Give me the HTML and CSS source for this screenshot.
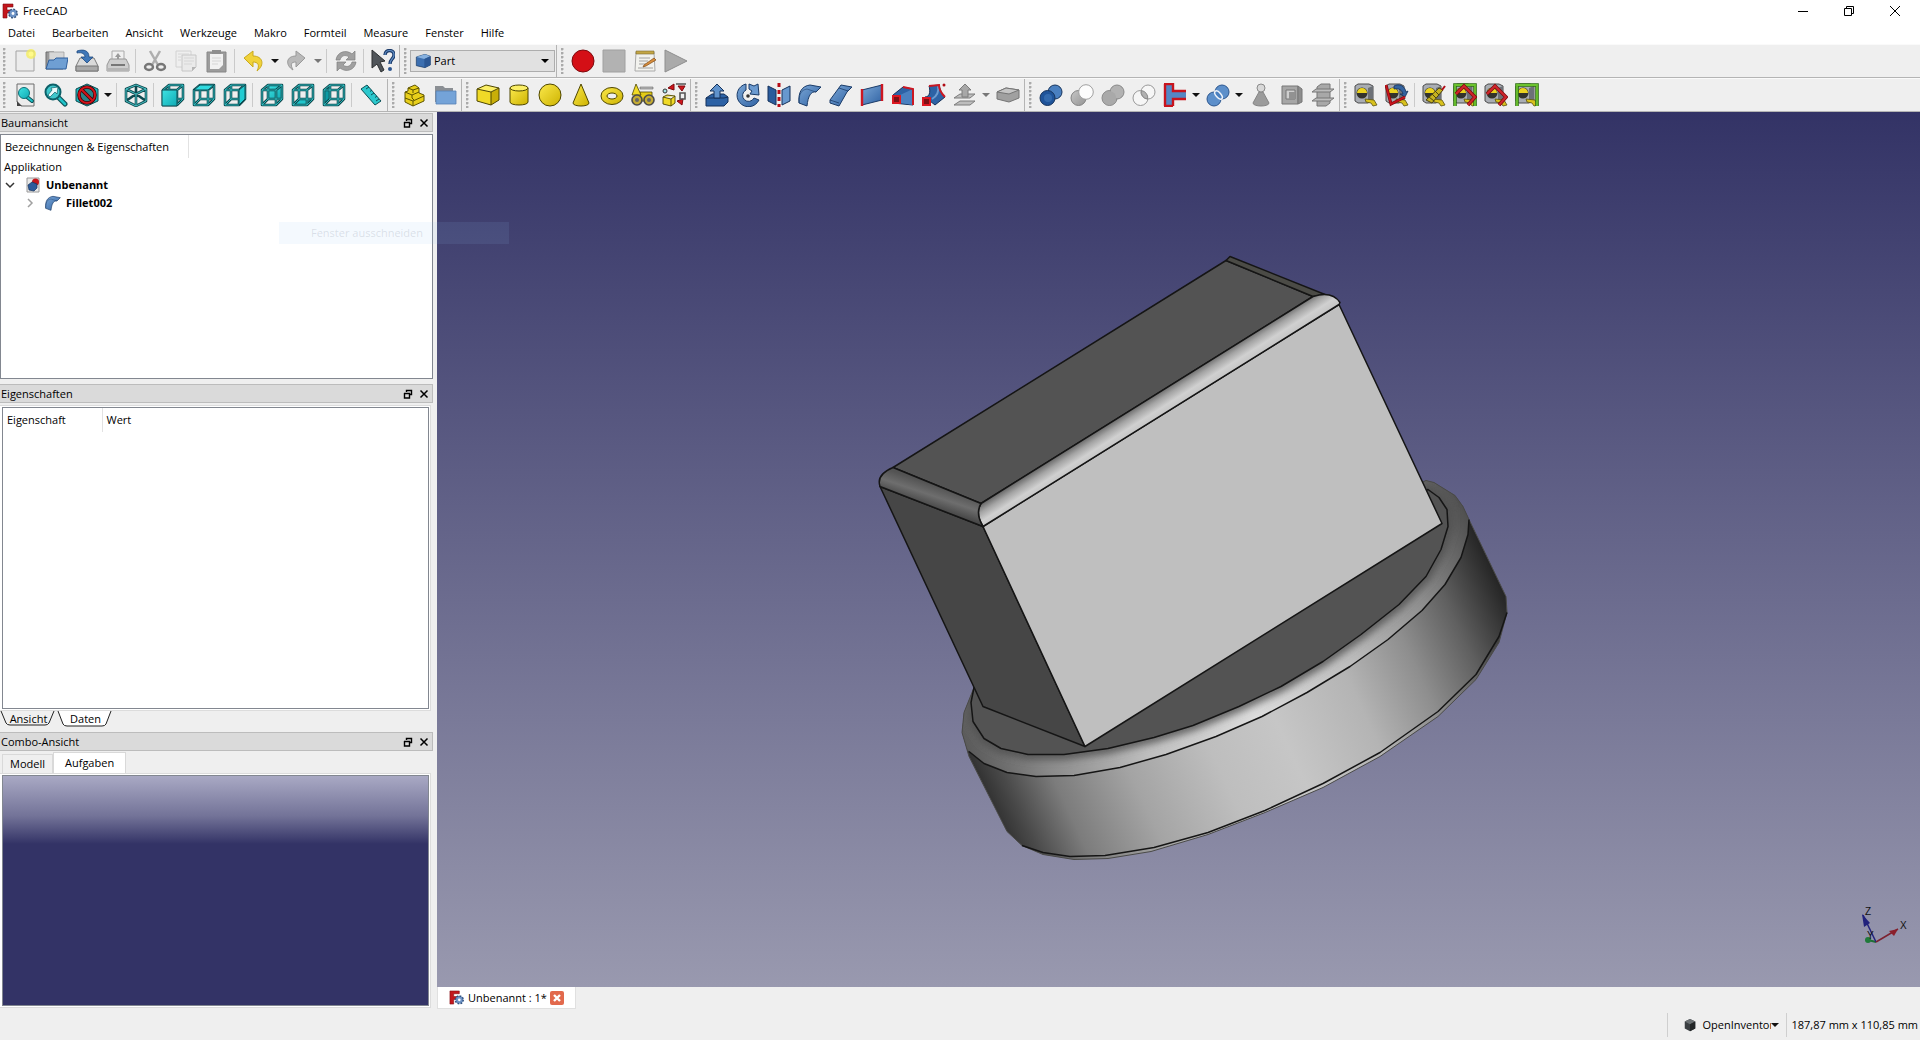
FILE: index.html
```html
<!DOCTYPE html>
<html lang="de">
<head>
<meta charset="utf-8">
<title>FreeCAD</title>
<link rel="stylesheet" href="styles.css">
</head>
<body>
<svg class="defs" aria-hidden="true">
  <defs>
    <linearGradient id="gBlue" x1="0" y1="0" x2="1" y2="1"><stop offset="0" stop-color="#7aa6d6"/><stop offset="1" stop-color="#2f62a3"/></linearGradient>
    <linearGradient id="gYel" x1="0" y1="0" x2="1" y2="1"><stop offset="0" stop-color="#fbe94c"/><stop offset="1" stop-color="#cdb200"/></linearGradient>
    <linearGradient id="gGrey" x1="0" y1="0" x2="1" y2="1"><stop offset="0" stop-color="#c6c6c6"/><stop offset="1" stop-color="#949494"/></linearGradient>
    <linearGradient id="gCyan" x1="0" y1="0" x2="1" y2="1"><stop offset="0" stop-color="#3fe3e3"/><stop offset="1" stop-color="#10aab4"/></linearGradient>
    <g id="wire" fill="none" stroke="#0e4a50" stroke-width="2.600" stroke-linejoin="round"><path d="M2 7h14v15H2zM8 2h14v14H8zM2 7l6-5M16 7l6-5M16 22l6-6M2 22l6-6"/></g>
    <g id="wireIn" fill="none" stroke="#35cfd2" stroke-width=".8" stroke-linejoin="round"><path d="M2 7h14v15H2zM8 2h14v14H8zM2 7l6-5M16 7l6-5M16 22l6-6M2 22l6-6"/></g>
    <g id="tape"><path d="M1 3l3-2h11l4 2v14l-5 3H4l-3-2z" fill="#a9adb3" stroke="#4c4c4c" stroke-width="1"/><path d="M14 5l5-2v14l-5 3z" fill="#6d7177"/><circle cx="8" cy="10" r="5.500" fill="#33332c"/><path d="M3 10a5 5 0 0 1 10 0z" fill="#ecd320"/><path d="M11 16l9 1 3 5-4 1-2-3-5-1z" fill="#d8c11d" stroke="#5b5213" stroke-width=".8"/></g>
  </defs>
  <symbol id="i-app" viewBox="0 0 16 16"><path d="M1 1h10v3H5v3h4v3H5v5H1z" fill="#c4161c" stroke="#7d0c10" stroke-width=".6"/><circle cx="11" cy="10.500" r="4" fill="#5b82b8" stroke="#31527f" stroke-width="2" stroke-dasharray="1.800 1.300"/><circle cx="11" cy="10.500" r="3.400" fill="#6d93c6"/><circle cx="11" cy="10.500" r="1.400" fill="#fff"/></symbol>
  <symbol id="i-new" viewBox="0 0 24 24"><path d="M3 2h18v20H3z" fill="#ececec" stroke="#a3a3a3"/><circle cx="18" cy="5" r="5" fill="#f6ee55" opacity=".75"/><circle cx="18" cy="5" r="2.500" fill="#fffa8a"/></symbol>
  <symbol id="i-open" viewBox="0 0 24 24"><path d="M2 3h8l1 2h8v15H2z" fill="#9a9a9a" stroke="#6d6d6d"/><path d="M5 3h15v12H5z" fill="#d7d7d7" stroke="#999" stroke-width=".7"/><path d="M5 11h5l2-2h12l-2 11H2z" fill="#6f9fd3" stroke="#2f5f9c"/></symbol>
  <symbol id="i-save" viewBox="0 0 24 24"><path d="M5 9h14l4 8v5H1v-5z" fill="#dadada" stroke="#7b7b7b"/><path d="M1 17h22v5H1z" fill="#a9a9a9" stroke="#777"/><path d="M2 2c6-2 12-1 12 6h4l-6 6-6-6h4c0-3-3-5-8-4z" fill="#3f77b8" stroke="#1e4a80" stroke-width=".8"/></symbol>
  <symbol id="i-print" viewBox="0 0 24 24"><path d="M6 2h12v10H6z" fill="#f0f0f0" stroke="#aaa"/><path d="M12 4l3 4h-2v3h-2V8H9z" fill="#9a9a9a"/><path d="M4 10h16l3 6v6H1v-6z" fill="#cecece" stroke="#979797"/><path d="M5 15h14v2H5z" fill="#777"/><path d="M1 19h22v3H1z" fill="#b5b5b5"/></symbol>
  <symbol id="i-cut" viewBox="0 0 24 24"><path d="M7 2l8 14M17 2L9 16" stroke="#aeaeae" stroke-width="2.500"/><g fill="none" stroke="#777" stroke-width="2.400"><ellipse cx="6" cy="18" rx="4" ry="3"/><ellipse cx="18" cy="18" rx="4" ry="3"/></g></symbol>
  <symbol id="i-copy" viewBox="0 0 24 24"><path d="M2 2h15v16H2z" fill="#efefef" stroke="#d2d2d2"/><path d="M8 6h14v12l-4 4H8z" fill="#eaeaea" stroke="#c6c6c6"/><path d="M10 9h10M10 12h10M10 15h8M4 5h11M4 8h3M4 11h3" stroke="#d6d6d6"/><path d="M22 18l-4 4v-4z" fill="#b5b5b5"/></symbol>
  <symbol id="i-paste" viewBox="0 0 24 24"><path d="M2 3h19v20H2z" fill="#9c9c9c" stroke="#878787"/><path d="M5 5h13v15H5z" fill="#f1f1f1"/><path d="M7 1h9v4H7z" fill="#8f8f8f"/><path d="M7 9h9M7 12h9M7 15h6" stroke="#d5d5d5"/><path d="M18 16v4h-4z" fill="#9c9c9c"/></symbol>
  <symbol id="i-undo" viewBox="0 0 24 24"><path d="M2 9l9-7v5c10 0 12 9 4 15 3-6 1-9-4-9v5z" fill="#f0d23a" stroke="#c9a91c"/></symbol>
  <symbol id="i-redo" viewBox="0 0 24 24"><path d="M20 9l-9-7v5C1 7 0 16 8 21c-3-6-2-8 3-8v5z" fill="#b9b9b9" stroke="#999"/></symbol>
  <symbol id="i-refresh" viewBox="0 0 24 24"><path d="M2 11C3 3 12 0 18 5l3-3v9h-9l3-3C11 5 7 7 6 11z" fill="#a0a0a0" stroke="#808080" stroke-width=".7"/><path d="M22 13c-1 8-10 11-16 6l-3 3v-9h9l-3 3c4 3 8 1 9-3z" fill="#a0a0a0" stroke="#808080" stroke-width=".7"/></symbol>
  <symbol id="i-whats" viewBox="0 0 24 24"><path d="M1 1l13 11-5 1 4 8-3 2-4-8-5 4z" fill="#50555a" stroke="#2c2f31"/><path d="M14 6c0-6 9-6 9 0 0 4-4 4-4 9" fill="none" stroke="#1d3c6b" stroke-width="3.400"/><path d="M14 6c0-6 9-6 9 0 0 4-4 4-4 9" fill="none" stroke="#6391c8" stroke-width="1.200"/><circle cx="19" cy="20" r="2" fill="#2d568f"/></symbol>
  <symbol id="i-rec" viewBox="0 0 24 24"><circle cx="12" cy="12" r="11" fill="#d40f16" stroke="#7d0a0e"/></symbol>
  <symbol id="i-stop" viewBox="0 0 24 24"><path d="M1 1h22v22H1z" fill="#b2b2b2" stroke="#a0a0a0"/></symbol>
  <symbol id="i-note" viewBox="0 0 24 24"><path d="M3 3h18l1 19H2z" fill="#f2f2ee" stroke="#aaa"/><path d="M3 2h18v3H3z" fill="#c3a645" stroke="#7a6a30" stroke-width=".6"/><path d="M6 9h11M6 12h9M6 15h7M5 19h15" stroke="#a2a2a2"/><path d="M11 16l10-7 2 2-10 6-3 1z" fill="#d88d3c" stroke="#7d4b18" stroke-width=".7"/></symbol>
  <symbol id="i-play" viewBox="0 0 24 24"><path d="M1 1l22 11L1 23z" fill="#aaa" stroke="#8e8e8e"/></symbol>
  <symbol id="i-part" viewBox="0 0 24 24"><path d="M2 6l13-4 8 3v13l-8 4L2 19z" fill="#3c6fb0" stroke="#173861"/><path d="M2 6l13-4 8 3-9 4z" fill="#86b0de"/><path d="M14 9l9-4v13l-9 4z" fill="#2b5794"/></symbol>

  <symbol id="i-fitall" viewBox="0 0 24 24"><path d="M4 1h17v22H8l-4-4z" fill="#ececec" stroke="#6c6c6c"/><path d="M4 18l5 5H4z" fill="#444"/><path d="M14 14l5 4" stroke="#0d5157" stroke-width="4" stroke-linecap="round"/><path d="M14 14l5 4" stroke="#20c3c8" stroke-width="2" stroke-linecap="round"/><circle cx="11" cy="10" r="5.500" fill="url(#gCyan)" stroke="#0d6d74"/></symbol>
  <symbol id="i-fitsel" viewBox="0 0 24 24"><path d="M13 13l8 8" stroke="#0d5157" stroke-width="5" stroke-linecap="round"/><path d="M13 13l8 8" stroke="#20c3c8" stroke-width="2.600" stroke-linecap="round"/><circle cx="9" cy="9" r="7.500" fill="#3fc7cb" stroke="#0d6068" stroke-width="2"/><path d="M4 12l4-5-1-2 7-1-1 7-2-2-5 5z" fill="#e9fbfb" stroke="#0d6068" stroke-width=".7"/></symbol>
  <symbol id="i-style" viewBox="0 0 24 24"><path d="M12 1l11 5v12l-11 5L1 18V6z" fill="#1eb9bf" stroke="#0d4c52"/><circle cx="12" cy="12" r="8" fill="#2b8388" stroke="#3b0508" stroke-width="3.600"/><path d="M6.500 6.500l11 11" stroke="#3b0508" stroke-width="3.600"/><circle cx="12" cy="12" r="8" fill="none" stroke="#d2131a" stroke-width="2"/><path d="M6.500 6.500l11 11" stroke="#d2131a" stroke-width="2"/></symbol>
  <symbol id="i-iso" viewBox="0 0 24 24"><path d="M12 2l10 4v12l-10 5-10-5V6zM2 6l10 5 10-5M12 11v12M12 2v9M2 18l10-7 10 7" fill="none" stroke="#0e4a50" stroke-width="2.600" stroke-linejoin="round"/><path d="M12 2l10 4v12l-10 5-10-5V6zM2 6l10 5 10-5M12 11v12" fill="none" stroke="#4fd0d3" stroke-width=".9"/></symbol>
  <symbol id="i-front" viewBox="0 0 24 24"><use href="#wire"/><use href="#wireIn"/><path d="M1 7h15v16H1z" fill="url(#gCyan)" stroke="#0e4a50"/></symbol>
  <symbol id="i-top" viewBox="0 0 24 24"><use href="#wire"/><use href="#wireIn"/><path d="M2 7l6-5h14l-6 5z" fill="#2fdadf" stroke="#0e4a50"/></symbol>
  <symbol id="i-right" viewBox="0 0 24 24"><use href="#wire"/><use href="#wireIn"/><path d="M16 7l6-5v14l-6 6z" fill="#23ccd2" stroke="#0e4a50"/></symbol>
  <symbol id="i-rear" viewBox="0 0 24 24"><path d="M8 2h14v14H8z" fill="url(#gCyan)"/><use href="#wire"/><use href="#wireIn"/></symbol>
  <symbol id="i-bottom" viewBox="0 0 24 24"><path d="M2 22l6-6h14l-6 6z" fill="#20c5cb"/><use href="#wire"/><use href="#wireIn"/></symbol>
  <symbol id="i-left" viewBox="0 0 24 24"><path d="M2 7l6-5v14l-6 6z" fill="#0f9aa3"/><use href="#wire"/><use href="#wireIn"/></symbol>
  <symbol id="i-measure" viewBox="0 0 24 24"><path d="M2 6l6-4 14 16-6 4z" fill="#2cc8cd" stroke="#0d5157"/><path d="M10 4l-3 2M13 7l-2 1.500M15 10l-3 2M18 13l-2 1.500M20 16l-3 2" stroke="#0d5157"/></symbol>
  <symbol id="i-pbody" viewBox="0 0 24 24"><path d="M3 15V9l3-1V5l7-3 4 3v5l5 2v6l-11 5-8-4z" fill="#e8cf1b" stroke="#5f5500"/><path d="M3 9l7 3 7-3M6 5l5 2 6-2M3 15l8 3 11-5M11 18v5M10 12v3l2 2M11 7v3" fill="none" stroke="#5f5500"/></symbol>
  <symbol id="i-group" viewBox="0 0 24 24"><path d="M2 3h8l2 2h8v14H2z" fill="#8b8f94"/><path d="M3 8h20v13H3z" fill="#74a3d8" stroke="#5580b5" stroke-width=".8"/></symbol>
  <symbol id="i-box" viewBox="0 0 24 24"><path d="M1 6l14 3v13L1 18z" fill="#f0da27"/><path d="M15 9l8-4v12l-8 5z" fill="#c9ae08"/><path d="M1 6l9-4 13 3-8 4z" fill="#fbef66"/><path d="M1 6l9-4 13 3v12l-8 5-14-4zM1 6l14 3 8-4M15 9v13" fill="none" stroke="#4e4600"/></symbol>
  <symbol id="i-cyl" viewBox="0 0 24 24"><path d="M3 5v14c0 4 18 4 18 0V5z" fill="url(#gYel)" stroke="#4e4600"/><ellipse cx="12" cy="5" rx="9" ry="3" fill="#fbef66" stroke="#4e4600"/></symbol>
  <symbol id="i-sph" viewBox="0 0 24 24"><circle cx="12" cy="12" r="11" fill="url(#gYel)" stroke="#4e4600"/></symbol>
  <symbol id="i-cone" viewBox="0 0 24 24"><path d="M12 1l8 19c0 4-16 4-16 0z" fill="url(#gYel)" stroke="#4e4600"/></symbol>
  <symbol id="i-torus" viewBox="0 0 24 24"><ellipse cx="12" cy="13" rx="11" ry="8.500" fill="url(#gYel)" stroke="#4e4600"/><ellipse cx="12" cy="13" rx="5" ry="3" fill="#efefef" stroke="#4e4600"/></symbol>
  <symbol id="i-prim" viewBox="0 0 24 24"><path d="M9 9h12v9H9z" fill="#e4cb16" stroke="#4e4600" stroke-width=".8"/><path d="M5 1l5 11H1z" fill="#f0da27" stroke="#4e4600" stroke-width=".8"/><path d="M9 4h13v2H9z" fill="#bbb" stroke="#666" stroke-width=".6"/><g fill="#c5ac33" stroke="#4b4b4b" stroke-width="1.600"><circle cx="6" cy="17" r="5"/><circle cx="18" cy="17" r="5"/></g><circle cx="6" cy="17" r="2" fill="#666"/><circle cx="18" cy="17" r="2" fill="#666"/></symbol>
  <symbol id="i-build" viewBox="0 0 24 24"><path d="M1 14l4-2 8 1v7l-4 3-8-2zM1 14l8 2 4-3M9 16v7" fill="#f0da27" stroke="#4e4600" stroke-width=".9"/><circle cx="3" cy="8" r="2" fill="#a5e3e3" stroke="#333"/><path d="M6 5l6-4v6zM16 3h7l-3 5zM15 18l6-2-1 6z" fill="#d0161c" stroke="#7d0a0e"/><path d="M14 1h10M18 10h5v6h-5z" fill="none" stroke="#555" stroke-width="1.600"/></symbol>

  <symbol id="i-extrude" viewBox="0 0 24 24"><path d="M1 15l6-4h12l4 3v5l-4 4H1z" fill="#2d62a5" stroke="#14315a"/><path d="M1 15h18l4-1" fill="none" stroke="#14315a"/><path d="M12 1l7 7h-4v7H9V8H5z" fill="#5f92cc" stroke="#14315a"/></symbol>
  <symbol id="i-revolve" viewBox="0 0 24 24"><path d="M10 1v6a6 6 0 1 0 8 8l5 2A11.500 11.500 0 1 1 10 1z" fill="url(#gBlue)" stroke="#1a3b68"/><path d="M13 1l5 2 4-2 1 11-9-1 2-3-3-2z" fill="#6c9bd0" stroke="#1a3b68"/><circle cx="12" cy="13" r="1.800" fill="#333"/></symbol>
  <symbol id="i-mirror" viewBox="0 0 24 24"><path d="M1 3l8 4v15l-8-4z" fill="#2a5b9c" stroke="#14315a"/><path d="M15 7l8-4v15l-8 4z" fill="#6798ce" stroke="#14315a"/><path d="M12 0v24" stroke="#b60d16" stroke-width="3" stroke-dasharray="4 3"/></symbol>
  <symbol id="i-fillet" viewBox="0 0 24 24"><path d="M1 20C0 9 4 3 12 2l11 2-5 5c-5-1-8 4-9 14z" fill="url(#gBlue)" stroke="#1a3b68"/><path d="M1 20c0-9 2-13 8-14l9 3" fill="none" stroke="#1a3b68" stroke-width=".8" opacity=".7"/></symbol>
  <symbol id="i-chamfer" viewBox="0 0 24 24"><path d="M1 17L12 2l11 2-5 5-8 14-9-3z" fill="url(#gBlue)" stroke="#1a3b68"/><path d="M10 5l9 3M1 17l9 3" stroke="#1a3b68" stroke-width=".8"/></symbol>
  <symbol id="i-ruled" viewBox="0 0 24 24"><path d="M2 7l20-5v15L2 22z" fill="url(#gBlue)" stroke="#1a3b68"/><path d="M2 6v17M22 1v17" stroke="#cc1722" stroke-width="2.400"/></symbol>
  <symbol id="i-loft" viewBox="0 0 24 24"><path d="M2 12L12 4l10 2v16L2 20z" fill="#2d62a5" stroke="#14315a"/><path d="M9 12l13-6v16L9 20z" fill="#4a80c0"/><path d="M12 4l10 2v16" fill="none" stroke="#cc1722" stroke-width="2"/><path d="M2 13h7v7H2z" fill="#7c1015" stroke="#dc1721" stroke-width="2"/></symbol>
  <symbol id="i-sweep" viewBox="0 0 24 24"><path d="M3 14c6 0 5-8 4-11l10-1c2 8 4 10 6 12l-10 8z" fill="#2d62a5" stroke="#14315a"/><path d="M10 16c5-3 7-8 6-13" fill="none" stroke="#6c9bd0" stroke-width="2"/><path d="M7 3l10-1c0 5 3 9 6 12" fill="none" stroke="#cc1722" stroke-width="2"/><path d="M1 15h7v7H1z" fill="#7c1015" stroke="#dc1721" stroke-width="2"/><circle cx="22" cy="2" r="1.500" fill="#b10d16"/></symbol>
  <symbol id="i-offset" viewBox="0 0 24 24"><path d="M1 22l6-4h15l-5 4zM1 15l6-4h15l-5 4z" fill="#bdbdbd" stroke="#7c7c7c"/><path d="M12 1l6 6h-3v7H9V7H6z" fill="#a7a7a7" stroke="#7c7c7c"/></symbol>
  <symbol id="i-thick" viewBox="0 0 24 24"><path d="M1 9l9-4 13 2v8l-10 4-12-3z" fill="#a0a0a0" stroke="#757575"/><path d="M1 9l9-4 13 2-10 4z" fill="#c5c5c5" stroke="#757575"/></symbol>

  <symbol id="i-bool" viewBox="0 0 24 24"><circle cx="16" cy="9" r="7" fill="#4a80c0" stroke="#17345c"/><circle cx="8.500" cy="15" r="7.500" fill="#1f549a" stroke="#17345c"/><circle cx="9" cy="15" r="4" fill="#4179ba" opacity=".6"/></symbol>
  <symbol id="i-bcut" viewBox="0 0 24 24"><circle cx="8.500" cy="15" r="7.500" fill="url(#gGrey)" stroke="#848484"/><circle cx="16" cy="9" r="7.300" fill="#fcfcfc" stroke="#a0a0a0"/></symbol>
  <symbol id="i-union" viewBox="0 0 24 24"><circle cx="8.500" cy="15" r="7.500" fill="#a9a9a9" stroke="#888"/><circle cx="16" cy="9" r="7" fill="#b2b2b2" stroke="#888"/><circle cx="8.500" cy="15" r="6.800" fill="#a9a9a9"/></symbol>
  <symbol id="i-inter" viewBox="0 0 24 24"><circle cx="8.500" cy="15" r="7.500" fill="#f6f6f6" stroke="#999"/><circle cx="16" cy="9" r="7" fill="#f6f6f6" stroke="#999"/><path d="M9.300 7.500A7.500 7.500 0 0 1 15.700 16 7 7 0 0 1 9.300 7.500z" fill="#b0b0b0" stroke="#888"/></symbol>
  <symbol id="i-join" viewBox="0 0 24 24"><path d="M2 1h7v22H2zM9 9h14v6H9z" fill="#5487c4"/><path d="M1 1h9v7h13M10 23v-7h13M1 23h9M2 1v22" fill="none" stroke="#c8141d" stroke-width="2.400"/></symbol>
  <symbol id="i-split" viewBox="0 0 24 24"><circle cx="16" cy="9" r="7" fill="#5c8fca" stroke="#2b568f"/><circle cx="8" cy="16" r="7" fill="#5c8fca" stroke="#2b568f"/><ellipse cx="12.500" cy="12" rx="2.500" ry="5" transform="rotate(-40 12.500 12)" fill="#4a80c0" stroke="#eef3fa" stroke-width="1.500"/></symbol>
  <symbol id="i-check" viewBox="0 0 24 24"><path d="M10 9h4l6 11c0 4-16 4-16 0z" fill="#9b9b9b" stroke="#858585"/><circle cx="12" cy="5" r="4" fill="#d8d8d8" stroke="#8a8a8a"/></symbol>
  <symbol id="i-defeat" viewBox="0 0 24 24"><path d="M2 3h16v18H2z" fill="#a6a6a6" stroke="#777"/><path d="M18 3l4 3v13l-4 2z" fill="#8d8d8d" stroke="#777"/><path d="M6 7h9v9H6z" fill="#cfcfcf" stroke="#777"/><path d="M9 9h6v7H9z" fill="#929292"/></symbol>
  <symbol id="i-section" viewBox="0 0 24 24"><path d="M6 4l4-3h9v19l-4 3H6z" fill="#a8a8a8" stroke="#777"/><path d="M1 9l4-3h18l-4 3zM1 18l4-3h18l-4 3z" fill="#bdbdbd" stroke="#777"/></symbol>
  <symbol id="i-mlin" viewBox="0 0 24 24"><use href="#tape"/></symbol>
  <symbol id="i-mang" viewBox="0 0 24 24"><use href="#tape"/><path d="M9 3c5-3 11 0 12 6l2-1-3 6-5-3h3c-1-4-4-6-9-5z" fill="#34639f" stroke="#14315a" stroke-width=".8"/><path d="M1 2l5 19 14-7" fill="none" stroke="#7d0a0e" stroke-width="3"/><path d="M1 2l5 19 14-7" fill="none" stroke="#c8141d" stroke-width="1.600"/></symbol>
  <symbol id="i-mref" viewBox="0 0 24 24"><use href="#tape"/><path d="M4 17L17 5l4 2L10 20z" fill="#c6b21f" stroke="#4b4410"/><path d="M7 14l5 4M10 11l4 4M13 8l4 4" stroke="#4b4410"/><path d="M20 7l3-4" stroke="#b10d16" stroke-width="2"/></symbol>
  <symbol id="i-mall" viewBox="0 0 24 24"><use href="#tape"/><path d="M2 23V2h20v21" fill="none" stroke="#2d6d12" stroke-width="3.600"/><path d="M2 23V2h20v21" fill="none" stroke="#6cc32e" stroke-width="1.800"/><path d="M3 11l8-8 11 11-7 8" fill="none" stroke="#7d0a0e" stroke-width="3.600"/><path d="M3 11l8-8 11 11-7 8" fill="none" stroke="#d0262c" stroke-width="2"/></symbol>
  <symbol id="i-m3d" viewBox="0 0 24 24"><use href="#tape"/><path d="M3 11l8-8 11 11-7 8" fill="none" stroke="#7d0a0e" stroke-width="3.600"/><path d="M3 11l8-8 11 11-7 8" fill="none" stroke="#d0262c" stroke-width="2"/></symbol>
  <symbol id="i-mdel" viewBox="0 0 24 24"><use href="#tape"/><path d="M2 23V2h20v21" fill="none" stroke="#2d6d12" stroke-width="3.600"/><path d="M2 23V2h20v21" fill="none" stroke="#6cc32e" stroke-width="1.800"/></symbol>

  <symbol id="i-float" viewBox="0 0 10 10"><path d="M3.500 3V1.500h5v4H7M3 1.500h6M1 4.500h6M1.500 4v5h5V4" fill="none" stroke="#000" stroke-width="1.400"/></symbol>
  <symbol id="i-x" viewBox="0 0 10 10"><path d="M1.500 1.500l7 7M8.500 1.500l-7 7" fill="none" stroke="#000" stroke-width="1.500"/></symbol>
  <symbol id="i-doc" viewBox="0 0 16 16"><path d="M2 1h12v14H2z" fill="#e9e9e9" stroke="#9a9a9a"/><circle cx="10.500" cy="5" r="3.500" fill="#c4161c"/><path d="M3 8l4-3 5 2v4l-3 3-5-1z" fill="#2c5b9b" stroke="#14315a" stroke-width=".7"/></symbol>
  <symbol id="i-cube" viewBox="0 0 16 16"><path d="M8 1l6 3v8l-6 3-6-3V4z" fill="#3b3f42"/><path d="M8 1l6 3-6 3-6-3z" fill="#6b7073"/><path d="M8 7l6-3v8l-6 3z" fill="#232628"/></symbol>
</svg>

<header class="titlebar">
  <svg class="app-icon"><use href="#i-app"/></svg>
  <span class="app-name">FreeCAD</span>
  <div class="window-controls">
    <button aria-label="Minimieren"><svg viewBox="0 0 10 10"><path d="M0 5.500h10" stroke="#000"/></svg></button>
    <button aria-label="Verkleinern"><svg viewBox="0 0 10 10"><path d="M.5 2.500h7v7h-7zM2.500 2.500v-2h7v7h-2" fill="none" stroke="#000"/></svg></button>
    <button aria-label="Schließen"><svg viewBox="0 0 10 10"><path d="M0 0l10 10M10 0L0 10" stroke="#000" fill="none"/></svg></button>
  </div>
</header>

<nav class="menubar">
  <button>Datei</button><button>Bearbeiten</button><button>Ansicht</button><button>Werkzeuge</button><button>Makro</button><button>Formteil</button><button>Measure</button><button>Fenster</button><button>Hilfe</button>
</nav>

<div class="toolrow">
  <div class="toolbar">
    <i class="grip"></i>
    <button class="tool" aria-label="Neu"><svg><use href="#i-new"/></svg></button>
    <button class="tool" aria-label="Öffnen"><svg><use href="#i-open"/></svg></button>
    <button class="tool" aria-label="Speichern"><svg><use href="#i-save"/></svg></button>
    <button class="tool" aria-label="Drucken"><svg><use href="#i-print"/></svg></button>
    <i class="sep"></i>
    <button class="tool" aria-label="Ausschneiden"><svg><use href="#i-cut"/></svg></button>
    <button class="tool" aria-label="Kopieren"><svg><use href="#i-copy"/></svg></button>
    <button class="tool" aria-label="Einfügen"><svg><use href="#i-paste"/></svg></button>
    <i class="sep"></i>
    <button class="tool" aria-label="Rückgängig"><svg><use href="#i-undo"/></svg></button>
    <button class="drop" aria-label="Rückgängig-Liste"></button>
    <button class="tool" aria-label="Wiederholen"><svg><use href="#i-redo"/></svg></button>
    <button class="drop drop-off" aria-label="Wiederholen-Liste"></button>
    <i class="sep"></i>
    <button class="tool" aria-label="Aktualisieren"><svg><use href="#i-refresh"/></svg></button>
    <i class="sep"></i>
    <button class="tool" aria-label="Direkthilfe"><svg><use href="#i-whats"/></svg></button>
  </div>
  <div class="toolbar">
    <i class="grip"></i>
    <div class="workbench">
      <svg><use href="#i-part"/></svg>
      <select aria-label="Arbeitsbereich"><option>Part</option></select>
    </div>
  </div>
  <div class="toolbar toolbar-last">
    <i class="grip"></i>
    <button class="tool" aria-label="Makro aufzeichnen"><svg><use href="#i-rec"/></svg></button>
    <button class="tool" aria-label="Aufzeichnung stoppen"><svg><use href="#i-stop"/></svg></button>
    <button class="tool" aria-label="Makros"><svg><use href="#i-note"/></svg></button>
    <button class="tool" aria-label="Makro ausführen"><svg><use href="#i-play"/></svg></button>
  </div>
</div>

<div class="toolrow">
  <div class="toolbar">
    <i class="grip"></i>
    <button class="tool" aria-label="Alles anzeigen"><svg><use href="#i-fitall"/></svg></button>
    <button class="tool" aria-label="Auswahl anzeigen"><svg><use href="#i-fitsel"/></svg></button>
    <button class="tool" aria-label="Darstellung"><svg><use href="#i-style"/></svg></button>
    <button class="drop" aria-label="Darstellungsarten"></button>
    <i class="sep"></i>
    <button class="tool" aria-label="Axonometrisch"><svg><use href="#i-iso"/></svg></button>
    <i class="sep"></i>
    <button class="tool" aria-label="Vorne"><svg><use href="#i-front"/></svg></button>
    <button class="tool" aria-label="Oben"><svg><use href="#i-top"/></svg></button>
    <button class="tool" aria-label="Rechts"><svg><use href="#i-right"/></svg></button>
    <i class="sep"></i>
    <button class="tool" aria-label="Hinten"><svg><use href="#i-rear"/></svg></button>
    <button class="tool" aria-label="Unten"><svg><use href="#i-bottom"/></svg></button>
    <button class="tool" aria-label="Links"><svg><use href="#i-left"/></svg></button>
    <i class="sep"></i>
    <button class="tool" aria-label="Messen"><svg><use href="#i-measure"/></svg></button>
  </div>
  <div class="toolbar">
    <i class="grip"></i>
    <button class="tool" aria-label="Teil"><svg><use href="#i-pbody"/></svg></button>
    <button class="tool" aria-label="Gruppe"><svg><use href="#i-group"/></svg></button>
  </div>
  <div class="toolbar">
    <i class="grip"></i>
    <button class="tool" aria-label="Würfel"><svg><use href="#i-box"/></svg></button>
    <button class="tool" aria-label="Zylinder"><svg><use href="#i-cyl"/></svg></button>
    <button class="tool" aria-label="Kugel"><svg><use href="#i-sph"/></svg></button>
    <button class="tool" aria-label="Kegel"><svg><use href="#i-cone"/></svg></button>
    <button class="tool" aria-label="Torus"><svg><use href="#i-torus"/></svg></button>
    <button class="tool" aria-label="Grundkörper"><svg><use href="#i-prim"/></svg></button>
    <button class="tool" aria-label="Formgenerator"><svg><use href="#i-build"/></svg></button>
  </div>
  <div class="toolbar">
    <i class="grip"></i>
    <button class="tool" aria-label="Extrudieren"><svg><use href="#i-extrude"/></svg></button>
    <button class="tool" aria-label="Rotieren"><svg><use href="#i-revolve"/></svg></button>
    <button class="tool" aria-label="Spiegeln"><svg><use href="#i-mirror"/></svg></button>
    <button class="tool" aria-label="Verrundung"><svg><use href="#i-fillet"/></svg></button>
    <button class="tool" aria-label="Fase"><svg><use href="#i-chamfer"/></svg></button>
    <button class="tool" aria-label="Regelfläche"><svg><use href="#i-ruled"/></svg></button>
    <button class="tool" aria-label="Ausformung"><svg><use href="#i-loft"/></svg></button>
    <button class="tool" aria-label="Austragung"><svg><use href="#i-sweep"/></svg></button>
    <button class="tool" aria-label="Versatz"><svg><use href="#i-offset"/></svg></button>
    <button class="drop drop-off" aria-label="Versatzarten"></button>
    <button class="tool" aria-label="Dicke"><svg><use href="#i-thick"/></svg></button>
  </div>
  <div class="toolbar">
    <i class="grip"></i>
    <button class="tool" aria-label="Boolesche Verknüpfung"><svg><use href="#i-bool"/></svg></button>
    <button class="tool" aria-label="Differenz"><svg><use href="#i-bcut"/></svg></button>
    <button class="tool" aria-label="Vereinigung"><svg><use href="#i-union"/></svg></button>
    <button class="tool" aria-label="Schnittmenge"><svg><use href="#i-inter"/></svg></button>
    <button class="tool" aria-label="Verbinden"><svg><use href="#i-join"/></svg></button>
    <button class="drop" aria-label="Verbindungsarten"></button>
    <button class="tool" aria-label="Aufteilen"><svg><use href="#i-split"/></svg></button>
    <button class="drop" aria-label="Aufteilungsarten"></button>
    <button class="tool" aria-label="Geometrie prüfen"><svg><use href="#i-check"/></svg></button>
    <button class="tool" aria-label="Merkmal entfernen"><svg><use href="#i-defeat"/></svg></button>
    <button class="tool" aria-label="Querschnitte"><svg><use href="#i-section"/></svg></button>
  </div>
  <div class="toolbar toolbar-last">
    <i class="grip"></i>
    <button class="tool" aria-label="Linear messen"><svg><use href="#i-mlin"/></svg></button>
    <button class="tool" aria-label="Winkel messen"><svg><use href="#i-mang"/></svg></button>
    <i class="sep"></i>
    <button class="tool" aria-label="Messung auffrischen"><svg><use href="#i-mref"/></svg></button>
    <button class="tool" aria-label="Alle umschalten"><svg><use href="#i-mall"/></svg></button>
    <button class="tool" aria-label="3D umschalten"><svg><use href="#i-m3d"/></svg></button>
    <button class="tool" aria-label="Delta umschalten"><svg><use href="#i-mdel"/></svg></button>
  </div>
</div>

<main class="workspace">
  <aside class="docks">
    <section class="dock dock-tree">
      <div class="dock-title"><h2>Baumansicht</h2><button aria-label="Lösen"><svg><use href="#i-float"/></svg></button><button aria-label="Schließen"><svg><use href="#i-x"/></svg></button></div>
      <div class="tree">
        <div class="tree-head"><span>Bezeichnungen &amp; Eigenschaften</span></div>
        <ul>
          <li class="node-root">Applikation</li>
          <li class="node"><svg class="arrow" viewBox="0 0 10 10"><path d="M1 3l4 4 4-4" fill="none" stroke="#333" stroke-width="1.500"/></svg><svg class="node-icon"><use href="#i-doc"/></svg><b>Unbenannt</b></li>
          <li class="node node-child"><svg class="arrow" viewBox="0 0 10 10"><path d="M3 1l4 4-4 4" fill="none" stroke="#a0a0a0" stroke-width="1.500"/></svg><svg class="node-icon"><use href="#i-fillet"/></svg><b>Fillet002</b></li>
        </ul>
      </div>
    </section>
    <section class="dock dock-props">
      <div class="dock-title"><h2>Eigenschaften</h2><button aria-label="Lösen"><svg><use href="#i-float"/></svg></button><button aria-label="Schließen"><svg><use href="#i-x"/></svg></button></div>
      <div class="pane"><div class="pane-inner">
        <table class="props"><thead><tr><th class="prop-name">Eigenschaft</th><th>Wert</th></tr></thead></table>
      </div></div>
      <div class="slant-tabs">
        <button class="slant"><svg viewBox="0 0 60 16" preserveAspectRatio="none"><path d="M1 0l5 12q1 2 4 2h35q3 0 4-2l5-12" fill="#f0f0f0" stroke="#222"/></svg><span>Ansicht</span></button>
        <button class="slant slant-on"><svg viewBox="0 0 60 16" preserveAspectRatio="none"><path d="M1 0l5 13q1 2 4 2h35q3 0 4-2l5-13" fill="#fff" stroke="#222"/></svg><span>Daten</span></button>
      </div>
    </section>
    <section class="dock dock-combo">
      <div class="dock-title"><h2>Combo-Ansicht</h2><button aria-label="Lösen"><svg><use href="#i-float"/></svg></button><button aria-label="Schließen"><svg><use href="#i-x"/></svg></button></div>
      <div class="tabs"><button class="tab">Modell</button><button class="tab tab-on">Aufgaben</button></div>
      <div class="pane"><div class="pane-inner task-panel"></div></div>
    </section>
    <div class="ghost-menu">Fenster ausschneiden</div>
  </aside>

  <section class="mdi">
    <div class="viewport">
      <svg class="model" viewBox="437 113 1483 874" role="img" aria-label="3D-Modell">
        <defs>
          <linearGradient id="side" gradientUnits="userSpaceOnUse" x1="968" y1="752" x2="1469" y2="520"><stop offset="0" stop-color="#333"/><stop offset=".04" stop-color="#4a4a4a"/><stop offset=".12" stop-color="#7c7c7c"/><stop offset=".25" stop-color="#a4a4a4"/><stop offset=".4" stop-color="#bebebe"/><stop offset=".53" stop-color="#c6c6c6"/><stop offset=".68" stop-color="#b4b4b4"/><stop offset=".8" stop-color="#8e8e8e"/><stop offset=".9" stop-color="#606060"/><stop offset="1" stop-color="#262626"/></linearGradient>
          <linearGradient id="ring" gradientUnits="userSpaceOnUse" x1="968" y1="752" x2="1469" y2="520"><stop offset="0" stop-color="#5a5a5a"/><stop offset=".12" stop-color="#8a8a8a"/><stop offset=".3" stop-color="#c0c0c0"/><stop offset=".5" stop-color="#dcdcdc"/><stop offset=".7" stop-color="#bcbcbc"/><stop offset=".86" stop-color="#8e8e8e"/><stop offset="1" stop-color="#505050"/></linearGradient>
          <linearGradient id="edgeFront" gradientUnits="userSpaceOnUse" x1="1147" y1="400" x2="1159" y2="419"><stop offset="0" stop-color="#6a6a6a"/><stop offset=".3" stop-color="#a4a4a4"/><stop offset=".65" stop-color="#d0d0d0"/><stop offset="1" stop-color="#c4c4c4"/></linearGradient>
          <linearGradient id="edgeLeft" gradientUnits="userSpaceOnUse" x1="937" y1="486" x2="930" y2="507"><stop offset="0" stop-color="#535353"/><stop offset=".5" stop-color="#6e6e6e"/><stop offset="1" stop-color="#494949"/></linearGradient>
          <filter id="soft" x="-10%" y="-10%" width="120%" height="120%"><feGaussianBlur stdDeviation="4"/></filter>
          <path id="outer" d="M1426 481L1434 483L1455 496L1463 507L1469 520L1506 597L1507 613L1499 643L1476 680L1438 717L1380 757L1323 788L1265 813L1208 835L1151 852L1108 859L1074 860L1043 855L1022 846L1007 832L969 757L962 733L964 713L974 688Z"/>
          <path id="cylTop" d="M1469 520L1468 535L1461 558L1445 585L1422 611L1388 640L1350 667L1307 693L1262 717L1216 737L1166 755L1120 768L1074 776L1036 777L1007 773L984 764L969 752"/>
          <path id="inner" d="M974 688L971 703L973 722L984 739L1001 749L1028 755L1064 755L1108 749L1154 738L1193 726L1239 707L1281 687L1323 662L1361 635L1399 605L1426 577L1441 550L1448 527L1447 510L1439 498L1428 490Z"/>
          <path id="rim" d="M1507 613L1499 637L1476 675L1438 712L1380 753L1323 784L1265 811L1208 833L1154 848L1105 856L1070 857L1043 853L1022 846"/>
          <clipPath id="clipOuter"><use href="#outer"/></clipPath>
        </defs>
        <use href="#outer" fill="url(#side)"/>
        <g clip-path="url(#clipOuter)">
          <path d="M1469 520L1468 535L1461 558L1445 585L1422 611L1388 640L1350 667L1307 693L1262 717L1216 737L1166 755L1120 768L1074 776L1036 777L1007 773L984 764L969 752L920 700L980 640L1420 440L1475 500Z" fill="url(#ring)"/>
          <use href="#inner" fill="none" stroke="#505050" stroke-width="9" filter="url(#soft)"/>
        </g>
        <use href="#inner" fill="#535353"/>
        <g fill="none" stroke="#151515" stroke-width="1.500" stroke-linejoin="round">
          <use href="#outer" stroke="#4a4a48" stroke-width="1"/>
          <use href="#inner"/><use href="#cylTop"/><use href="#rim"/>
        </g>
        <g stroke="#151515" stroke-width="1.500" stroke-linejoin="round">
          <path d="M880 487L983 527L1085 747L983 707Z" fill="#464646"/>
          <path d="M983 527L1339 305L1442 524L1085 747Z" fill="#bfbfbf"/>
          <path d="M893 468L1226 261L1313 297L981 504Z" fill="#535353"/>
          <path d="M1226 261L1230 257L1325 295L1313 297Z" fill="#4b4b46"/>
          <path d="M981 504L1313 297Q1332 291 1340 303L1339 305L983 527Q975 514 981 504Z" fill="url(#edgeFront)"/>
          <path d="M893 468L981 504Q975 514 983 527L880 487Q876 475 893 468Z" fill="url(#edgeLeft)"/>
        </g>
      </svg>
      <svg class="axis-cross" viewBox="0 0 60 50" role="img" aria-label="Achsenkreuz">
        <path d="M20 37L12 35" stroke="#1f6f35" stroke-width="2"/><circle cx="12" cy="35" r="3" fill="#1f7a3a"/>
        <path d="M20 37L7 10" stroke="#22227c" stroke-width="1.500"/><path d="M6 9l8 9-6 4z" fill="#22227c"/>
        <path d="M20 37L42 24" stroke="#7c2230" stroke-width="1.500"/><path d="M42 24l-4 7-5-5z" fill="#8b1f2b"/>
        <text x="9" y="10">Z</text><text x="44" y="24">X</text><text x="11" y="34">Y</text>
      </svg>
    </div>
    <div class="mdi-tabs">
      <div class="mdi-tab"><svg><use href="#i-app"/></svg><span>Unbenannt : 1*</span><button aria-label="Schließen"><svg viewBox="0 0 14 14"><path d="M4 4l6 6M10 4l-6 6" stroke="#fff" stroke-width="2.400"/></svg></button></div>
    </div>
  </section>
</main>

<footer class="statusbar">
  <button class="nav-style"><svg><use href="#i-cube"/></svg><span>OpenInventor</span><i class="caret"></i></button>
  <span class="dims">187,87 mm x 110,85 mm</span>
</footer>
</body>
</html>
```
FILE: styles.css
```css
* { box-sizing: border-box; }

body {
  margin: 0;
  min-height: 100vh;
  display: flex;
  flex-direction: column;
  background: #efefef;
  color: #000;
  font: 11px/18px "Open Sans", "Noto Sans", sans-serif;
  overflow: hidden;
}

button, select {
  font: inherit;
  color: inherit;
  background: none;
  border: 0;
  padding: 0;
  margin: 0;
}

.defs { position: absolute; width: 0; height: 0; }

/* Title bar and menu */
.titlebar {
  display: flex;
  align-items: center;
  height: 22px;
  padding-left: 2px;
  background: #fff;
}
.app-icon { width: 16px; height: 16px; }
.app-name { margin-left: 5px; }
.window-controls { display: flex; margin: 0 2px 0 auto; }
.window-controls button { width: 46px; height: 22px; display: grid; place-items: center; }
.window-controls svg { width: 10px; height: 10px; display: block; }

.menubar { display: flex; gap: 1px; height: 22px; background: #fff; }
.menubar button { padding: 0 8px; height: 21px; }

/* Toolbars */
.toolrow {
  display: flex;
  height: 34px;
  border-top: 1px solid #fafafa;
  border-bottom: 1px solid #b4b4b4;
}
.toolbar { display: flex; align-items: center; padding-right: 1px; border-right: 1px solid #b4b4b4; }
.toolbar-last { border-right: 0; }
.grip {
  width: 3px;
  height: 26px;
  margin: 0 3px 0 4px;
  background: radial-gradient(circle at 1px 1px, #aaa 1px, transparent 2px) 0 0 / 3px 4px;
}
.toolbar:first-child .grip { margin-left: 3px; }
.tool { width: 31px; height: 31px; display: grid; place-items: center; }
.tool svg { width: 24px; height: 24px; display: block; }
.drop { width: 12px; height: 31px; display: grid; place-items: center; }
.drop::before, .caret {
  content: "";
  border: 4px solid transparent;
  border-top-color: #111;
  border-bottom: 0;
}
.drop-off::before { border-top-color: #777; }
.sep { width: 1px; height: 24px; margin: 0 3px 0 2px; background: #cacaca; }

.workbench {
  position: relative;
  display: flex;
  align-items: center;
  width: 145px;
  height: 22px;
  background: #e1e1e1;
  border: 1px solid #adadad;
}
.workbench::after {
  content: "";
  position: absolute;
  right: 5px;
  border: 4px solid transparent;
  border-top-color: #000;
  border-bottom: 0;
}
.workbench svg { width: 16px; height: 16px; margin-left: 4px; flex: none; }
.workbench select { appearance: none; flex: 1; height: 20px; padding-left: 3px; }

/* Workspace */
.workspace { flex: 1; display: flex; min-height: 0; }
.docks { position: relative; width: 434px; margin-right: 3px; padding-top: 1px; display: flex; flex-direction: column; gap: 5px; }
.dock { display: flex; flex-direction: column; min-height: 0; }
.dock-tree { flex: 266 1 0; }
.dock-props { flex: 343 1 0; }
.dock-combo { flex: 278 1 0; }
.dock-title {
  display: flex;
  align-items: center;
  flex: none;
  height: 19px;
  margin-right: 1px;
  background: #dadada;
  border: 1px solid #bcbcbc;
  border-left: 0;
}
.dock-title h2 { flex: 1; margin: 0; padding-left: 1px; font-size: 11px; font-weight: 400; }
.dock-title button { width: 16px; height: 16px; display: grid; place-items: center; }
.dock-title svg { width: 10px; height: 10px; display: block; }

.tree { flex: 1; margin: 2px 1px 0 0; background: #fff; border: 1px solid #828790; }
.tree-head { display: flex; height: 23px; }
.tree-head span { width: 188px; padding: 3px 0 0 4px; border-right: 1px solid #e2e2e2; white-space: nowrap; }
.tree ul { margin: 0; padding: 0; list-style: none; }
.tree li { height: 18px; display: flex; align-items: center; }
.node-root { padding-left: 3px; }
.node { padding-left: 4px; }
.node-child { padding-left: 24px; }
.arrow { width: 10px; height: 10px; }
.node-icon { width: 16px; height: 16px; margin: 0 5px 0 10px; }

.pane { flex: 1; min-height: 0; display: flex; margin: 2px 3px 0 0; padding: 1px 1px 1px 2px; background: #fff; border: 1px solid #dcdcdc; border-left: 0; }
.pane-inner { flex: 1; border: 1px solid #828790; }
.props { border-collapse: collapse; width: 100%; }
.props th { height: 24px; padding: 0 0 0 4px; font-weight: 400; text-align: left; }
.props .prop-name { width: 99px; border-right: 1px solid #e2e2e2; }

.slant-tabs { display: flex; flex: none; height: 16px; }
.slant { position: relative; width: 57px; height: 15px; line-height: 14px; }
.slant svg { position: absolute; left: 0; top: 0; width: 60px; height: 16px; }
.slant span { position: relative; }

.tabs { display: flex; align-items: flex-end; flex: none; height: 22px; padding-left: 2px; }
.tab { height: 19px; padding: 0 7px; border: 1px solid #d9d9d9; border-bottom: 0; }
.tab-on { height: 21px; padding: 0 11px; background: #fff; }
.tabs + .pane { margin: 0 3px 2px 0; }
.task-panel { background: linear-gradient(#a9a9c4, #737398 40px, #333366 68px); }

.ghost-menu {
  position: absolute;
  z-index: 2;
  left: 279px;
  top: 110px;
  width: 230px;
  height: 22px;
  padding-left: 32px;
  line-height: 22px;
  color: rgba(120, 130, 150, .22);
  background: rgba(145, 201, 247, .1);
}

/* 3D view */
.mdi { flex: 1; min-width: 0; display: flex; flex-direction: column; }
.viewport { position: relative; flex: 1; min-height: 0; background: linear-gradient(#333366, #9999af); }
.model { position: absolute; inset: 0; width: 100%; height: 100%; }
.axis-cross { position: absolute; right: 4px; bottom: 32px; width: 60px; height: 50px; overflow: visible; }
.axis-cross text { font: 10px "Liberation Sans", sans-serif; fill: #111; }
.mdi-tabs { display: flex; flex: none; height: 23px; }
.mdi-tab { display: flex; align-items: center; height: 22px; padding: 0 11px 0 11px; background: #fff; border: 1px solid #e0e0e0; border-top: 0; }
.mdi-tab svg { width: 15px; height: 15px; display: block; }
.mdi-tab span { margin: 0 3px 0 4px; white-space: nowrap; }
.mdi-tab button { width: 14px; height: 14px; background: #e2694c; border-radius: 2px; }
.mdi-tab button svg { width: 14px; height: 14px; }

/* Status bar */
.statusbar { display: flex; justify-content: flex-end; align-items: center; flex: none; height: 30px; padding-right: 2px; }
.nav-style { display: flex; align-items: center; width: 119px; height: 24px; padding-left: 15px; border-left: 1px solid #cfcfcf; }
.nav-style svg { width: 14px; height: 14px; flex: none; }
.nav-style span { width: 69px; margin-left: 5px; overflow: hidden; white-space: nowrap; text-align: left; }
.dims { padding-left: 4px; height: 24px; line-height: 24px; border-left: 1px solid #cfcfcf; white-space: nowrap; }
```
